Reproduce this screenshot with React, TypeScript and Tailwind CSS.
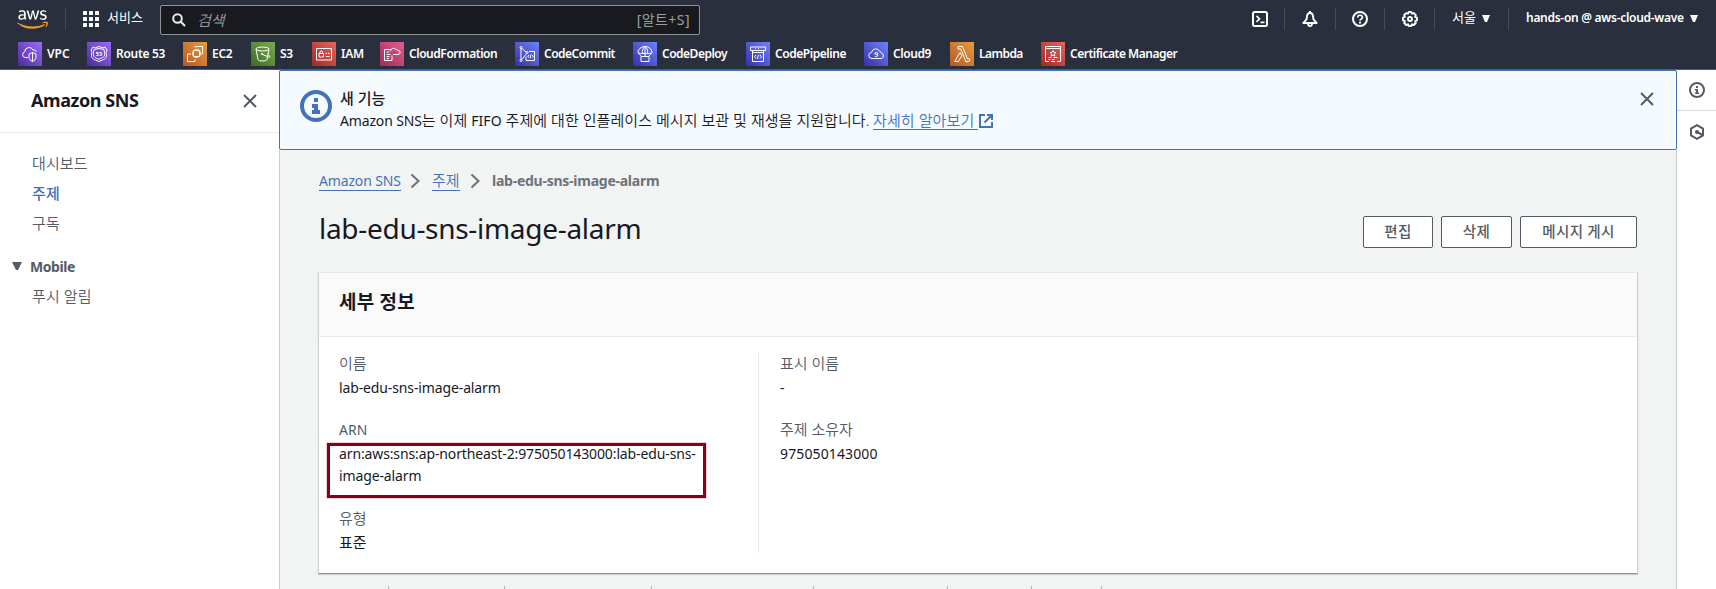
import type { ReactNode } from "react";
import { FaAws } from "react-icons/fa";

type Tone = "purple" | "orange" | "green" | "red" | "pink" | "blue";

const tones: Record<Tone, [string, string]> = {
  purple: ["#4d2a9e", "#9b6cf6"],
  orange: ["#b5562b", "#e79d3a"],
  green: ["#3b6a28", "#7bab50"],
  red: ["#a32727", "#e2685c"],
  pink: ["#a3285a", "#e0608a"],
  blue: ["#392eaa", "#6c84f8"],
};

const glyphs: Record<string, ReactNode> = {
  vpc: (
    <>
      <path d="M10 15.500H7.200a2.900 2.900 0 0 1-.4-5.700 4.300 4.300 0 0 1 8.300-1.600 2.300 2.300 0 0 1 3.300 1.600" />
      <path d="M14.500 10.500l3.500 1.500v3.200c0 2-1.300 3.400-3.500 4.300-2.200-.9-3.500-2.300-3.500-4.300V12zM14.500 10.500v9" />
    </>
  ),
  route53: (
    <>
      <path d="M6 5l2 1 4-1.500L16 6l2-1 2 3-1 2.500c1.500 4 0 6.500-3.500 7.500L12 19.500 8.500 18C5 17 3.500 14.500 5 10.500L4 8z" />
      <path d="M7 7.500l5-1 5 1 .5 3c.8 3-.5 5-3 5.700l-2.500 1-2.500-1c-2.500-.7-3.800-2.700-3-5.700z" />
      <text x="12" y="14" fontSize="5.500" fontWeight="700" textAnchor="middle" fill="#fff" stroke="none" fontFamily="Noto Sans">53</text>
    </>
  ),
  ec2: (
    <>
      <path d="M10.500 8.500h6v6h-6zM12 8.500V7M13.500 8.500V7M15 8.500V7M12 16v-1.500M13.500 16v-1.500M15 16v-1.500M10.500 10H9M10.500 11.500H9M10.500 13H9M18 10h-1.500M18 11.500h-1.500M18 13h-1.500" />
      <path d="M12 5.500V4.500h7.500V12h-1M8 12H4.500v7.500H12V17.500" />
    </>
  ),
  s3: (
    <>
      <ellipse cx="11.500" cy="7" rx="6.500" ry="2" />
      <path d="M5 7l2 10.500c.3 2 8.700 2 9 0L18 7M10.500 12l7 3c1.500.5 2-.5 1-1.200L17.200 13" />
      <circle cx="11" cy="12" r=".6" />
    </>
  ),
  iam: (
    <>
      <path d="M4.500 6.500h15v11.500h-15z" />
      <path d="M7 11.500h4.500V15H7zM8 11.500v-1.300a1.200 1.200 0 0 1 2.500 0v1.300M13.500 11.500h1.500M16 11.500h1.500M14 14.500h3.500" />
    </>
  ),
  cfn: (
    <>
      <path d="M12 13.500v5H4.500v-11h6M6.500 10h3M6.500 12.500h4M6.500 14.500h3M6.500 16.500h2.500" />
      <path d="M13 12.500h5a2 2 0 0 0 .2-4 1.900 1.900 0 0 0-2-.8 3 3 0 0 0-5.600 1.300" />
    </>
  ),
  commit: (
    <>
      <path d="M6 6v12M7 6.500l4 3.500M11.500 11.500L7 17.500M14 9.500h5.500v9H11v-4" />
      <circle cx="6" cy="5.500" r="1" />
      <circle cx="6" cy="18.500" r="1" />
      <circle cx="12" cy="10.500" r="1" />
      <path d="M14 13l-1.300 1.300 1.300 1.300M17 13l1.300 1.300-1.300 1.300M16 12.500l-1 3.500" />
    </>
  ),
  deploy: (
    <path d="M5 10.500a7 6 0 0 1 14 0c0 1.500-14 1.500-14 0zM9.500 11.500c-.5-3 .5-6 2.500-7 2 1 3 4 2.500 7M5 10.500l3.500 4M19 10.500l-3.500 4M12 4.500V14M8 14.500h8v5H8z" />
  ),
  pipeline: (
    <>
      <path d="M4.500 5h15v3.500h-15zM6.500 8.500v11h11v-11M6.500 10.500h11M9 6.700h1M12 6.700h1" />
      <path d="M10 13l-1.500 1.700L10 16.400M14 13l1.500 1.700L14 16.400M12.700 12.800l-1.400 4" />
    </>
  ),
  cloud9: (
    <>
      <path d="M8 16.500a3 3 0 0 1-.5-6 4.300 4.300 0 0 1 8.200-1 2.300 2.300 0 0 1 1.800 1.700 2.700 2.700 0 0 1-.5 5.300z" />
      <text x="12.200" y="15" fontSize="7" fontWeight="600" textAnchor="middle" fill="#fff" stroke="none" fontFamily="Noto Sans">9</text>
    </>
  ),
  lambda: (
    <path d="M8 4.500h4.500l5 12.500 1.500-.6 1 2.300-4 1.300-4.200-10.700M8 4.500V7h2.700l1 2.300M10 10.500l-5.300 9h3.800l3.300-6z" />
  ),
  acm: (
    <>
      <path d="M8 19.500H4.500v-15h15v15H16M4.500 6.500h15" />
      <path d="M12 8.500l.9 1.900 2 .2-1.500 1.400.5 2.100-1.900-1-1.900 1 .5-2.100-1.500-1.400 2-.2zM7.500 15.500h3M12.500 15.500h4M7.500 17.500h2M11 17.500h2.500M10 19.500h4" />
    </>
  ),
};

function ServiceIcon({ name, tone }: { name: string; tone: Tone }) {
  return (
    <svg viewBox="0 0 24 24" className="size-6 shrink-0" fill="none" stroke="#fff" strokeWidth="1">
      <defs>
        <linearGradient id={"g-" + name} x1="0" y1="1" x2="1" y2="0">
          <stop offset="0" stopColor={tones[tone][0]} />
          <stop offset="1" stopColor={tones[tone][1]} />
        </linearGradient>
      </defs>
      <rect width="24" height="24" fill={`url(#g-${name})`} stroke="none" />
      {glyphs[name]}
    </svg>
  );
}

const services: { label: string; icon: string; tone: Tone; cls: string; text: string }[] = [
  { label: "VPC", icon: "vpc", tone: "purple", cls: "w-[69px]", text: "tracking-normal" },
  { label: "Route 53", icon: "route53", tone: "purple", cls: "w-[96px]", text: "tracking-[-0.3px]" },
  { label: "EC2", icon: "ec2", tone: "orange", cls: "w-[68px]", text: "tracking-[-0.3px]" },
  { label: "S3", icon: "s3", tone: "green", cls: "w-[61px]", text: "tracking-[-0.3px]" },
  { label: "IAM", icon: "iam", tone: "red", cls: "w-[68px]", text: "tracking-[-0.3px]" },
  { label: "CloudFormation", icon: "cfn", tone: "pink", cls: "w-[135px]", text: "tracking-[-0.45px]" },
  { label: "CodeCommit", icon: "commit", tone: "blue", cls: "w-[118px]", text: "tracking-[-0.5px]" },
  { label: "CodeDeploy", icon: "deploy", tone: "blue", cls: "w-[113px]", text: "tracking-[-0.5px]" },
  { label: "CodePipeline", icon: "pipeline", tone: "blue", cls: "w-[118px]", text: "tracking-[-0.45px]" },
  { label: "Cloud9", icon: "cloud9", tone: "blue", cls: "w-[86px]", text: "tracking-[-0.4px]" },
  { label: "Lambda", icon: "lambda", tone: "orange", cls: "w-[91px]", text: "tracking-[-0.55px]" },
  { label: "Certificate Manager", icon: "acm", tone: "red", cls: "w-[150px]", text: "tracking-[-0.5px]" },
];

const Divider = ({ className = "" }: { className?: string }) => (
  <div className={`h-[22px] w-px shrink-0 bg-[#434b58] ${className}`} />
);

const Caret = ({ className = "" }: { className?: string }) => (
  <svg viewBox="0 0 8 7" className={`h-[7px] w-2 shrink-0 ${className}`} fill="currentColor">
    <path d="M0 0h8L5 7H3z" />
  </svg>
);

const Close = ({ className = "" }: { className?: string }) => (
  <svg viewBox="0 0 14 14" className={`size-3.5 shrink-0 ${className}`} fill="none" stroke="#545b64" strokeWidth="2">
    <path d="M1 1l12 12M13 1L1 13" />
  </svg>
);

const Chevron = ({ className = "" }: { className?: string }) => (
  <svg viewBox="0 0 10 16" className={`h-4 w-2.5 shrink-0 ${className}`} fill="none" stroke="#6b737c" strokeWidth="2">
    <path d="M1.500 1.500L8.500 8l-7 6.500" />
  </svg>
);

function TopBar() {
  return (
    <div className="flex h-[39px] shrink-0 text-white">
      <div className="mt-[7px] ml-[17px] grid h-[25px] w-[31px] shrink-0">
        <FaAws className="col-start-1 row-start-1 h-[25px] w-[31px] text-white [clip-path:inset(0_0_43%_0)]" />
        <FaAws className="col-start-1 row-start-1 h-[25px] w-[31px] text-[#f0982f] [clip-path:inset(57%_0_0_0)]" />
      </div>
      <Divider className="mt-2 ml-[17px]" />
      <svg viewBox="0 0 16 16" className="mt-[11px] ml-[17px] size-4 shrink-0" fill="#fff">
        {[0, 6, 12].map((y) => [0, 6, 12].map((x) => <rect key={x + "-" + y} x={x} y={y} width="4" height="4" rx=".5" />))}
      </svg>
      <div className="mt-[7px] ml-2 w-[53px] shrink-0 text-[13px] leading-5 tracking-[0.1px] whitespace-nowrap">서비스</div>
      <div className="mt-[5px] flex h-[30px] w-[540px] shrink-0 items-center rounded-[2px] border border-[#8d9494] bg-[#191a1f] pr-[9px] pl-[11px] text-[#95a1a3]">
        <svg viewBox="0 0 14 14" className="size-3.5 shrink-0" fill="none" stroke="#eaeded" strokeWidth="2">
          <circle cx="5.500" cy="5.500" r="4.300" />
          <path d="M8.800 8.800L13 13" />
        </svg>
        <span className="ml-[11px] text-[15px] leading-5 font-[350] italic">검색</span>
        <span className="ml-auto text-[14px] leading-5 tracking-[0.45px]">[알트+S]</span>
      </div>
      <svg viewBox="0 0 16 16" className="mt-[11px] ml-[552px] size-4 shrink-0" fill="none" stroke="#fff" strokeWidth="2">
        <rect x="1" y="1" width="14" height="14" rx="1.500" />
        <path d="M4.500 4.800l3 3-3 3M8.500 11.300h4" strokeWidth="1.700" />
      </svg>
      <Divider className="mt-2 ml-4" />
      <svg viewBox="0 0 16 16" className="mt-[11px] ml-[17px] size-4 shrink-0" fill="none" stroke="#fff" strokeWidth="1.900">
        <path d="M8 0v2M8 2C5.800 2 5 3.800 4.900 6L4.500 8.300 1.300 12h13.400L11.500 8.300 11.100 6C11 3.800 10.200 2 8 2z" strokeLinejoin="round" />
        <path d="M6 12.500c0 3.300 4 3.300 4 0" />
      </svg>
      <Divider className="mt-2 ml-[17px]" />
      <svg viewBox="0 0 16 16" className="mt-[11px] ml-4 size-4 shrink-0" fill="none" stroke="#fff" strokeWidth="2">
        <circle cx="8" cy="8" r="7" />
        <path d="M5.700 6.500c0-3 4.700-3 4.700 0C10.400 8 8 8 8 9.700" strokeWidth="1.700" />
        <path d="M8 10.800v1.700" />
      </svg>
      <Divider className="mt-2 ml-4" />
      <svg viewBox="0 0 16 16" className="mt-[11px] ml-[17px] size-4 shrink-0" fill="none" stroke="#fff" strokeWidth="1.900" strokeLinejoin="round">
        <path d="M6.700 1h2.600l.6 1.600L11.500 2l2.300 2-.7 1.800L15 6.700v2.600l-1.900.9.700 1.800-2 2-1.900-.7-.6 1.700H6.700l-.6-1.700-1.900.7-2-2 .7-1.800L1 9.300V6.700l1.900-.9L2.200 4l2-1.900 1.900.6z" />
        <circle cx="8" cy="8" r="2" />
      </svg>
      <Divider className="mt-2 ml-4" />
      <div className="mt-[7px] ml-[17px] w-[30px] shrink-0 text-[13px] leading-5">서울</div>
      <Caret className="mt-[15px]" />
      <Divider className="mt-2 ml-[18px]" />
      <div className="mt-2 ml-[17px] w-[164px] shrink-0 text-[12px] leading-5 font-semibold tracking-[-0.28px] whitespace-nowrap">
        hands-on @ aws-cloud-wave
      </div>
      <Caret className="mt-[15px]" />
    </div>
  );
}

function SideNav() {
  return (
    <nav className="w-[279px] shrink-0 bg-white text-[#545b64]">
      <div className="flex h-[63px] items-center border-b border-[#e6e8ea] pr-[22px] pb-px pl-[31px]">
        <h2 className="pb-px text-[18px] leading-6 font-bold tracking-[-0.42px] text-[#16191f]">Amazon SNS</h2>
        <Close className="ml-auto" />
      </div>
      <ul className="flex flex-col pt-[15px] pl-[32px] text-[15px] leading-[30px] font-[350] tracking-[0.1px]">
        <li>대시보드</li>
        <li className="font-medium text-[#3f6fb5]">주제</li>
        <li>구독</li>
      </ul>
      <div className="mt-[13px] flex h-[30px] items-center pl-3 text-[14px] font-bold tracking-[-0.45px]">
        <svg viewBox="0 0 10 8" className="mr-2 h-2 w-2.5" fill="#545b64">
          <path d="M0 0h10L6 8H4z" />
        </svg>
        Mobile
      </div>
      <div className="pl-[32px] text-[15px] leading-[30px] font-[350] tracking-[0.1px]">푸시 알림</div>
    </nav>
  );
}

function Banner() {
  return (
    <section className="flex h-20 shrink-0 rounded-[2px] border border-[#4472b8] bg-[#f5faff] text-[#16191f]">
      <svg viewBox="0 0 32 32" className="mt-[19px] ml-5 size-8 shrink-0" fill="#4472b8">
        <circle cx="16" cy="16" r="14" fill="none" stroke="#4472b8" strokeWidth="4" />
        <path d="M14 8h4v4h-4zM12 14h6v6h2v4h-8v-4h2v-2h-2z" />
      </svg>
      <div className="mt-[16px] ml-[8px]">
        <p className="text-[15px] leading-[22px] font-medium">새 기능</p>
        <p className="flex text-[15px] leading-[22px] font-[350] whitespace-nowrap">
          <span className="w-[530px] tracking-[0.05px]">
            <span className="text-[14px] font-normal tracking-[-0.15px]">Amazon SNS</span>는 이제{" "}
            <span className="text-[14px] font-normal">FIFO</span> 주제에 대한 인플레이스 메시지 보관 및 재생을 지원합니다.
          </span>
          <a className="ml-[3px] flex text-[#4472b8]">
            <span className="h-[21px] w-[105px] border-b border-[#4472b8] tracking-[0.1px]">자세히 알아보기</span>
            <svg viewBox="0 0 14 14" className="mt-[5px] ml-px size-3.5" fill="none" stroke="#4472b8" strokeWidth="2">
              <path d="M6 1H1v12h12V8M8 1h5v5M13 1L5.500 8.500" />
            </svg>
          </a>
        </p>
      </div>
      <Close className="mt-[21px] mr-[22px] ml-auto" />
    </section>
  );
}

function Field({ label, children, className = "" }: { label: string; children: ReactNode; className?: string }) {
  return (
    <div className={className}>
      <div className={`h-[22px] text-[#545b64] ${label === "ARN" ? "text-[14px] leading-[22px]" : "text-[15px] leading-[20px] font-[350]"}`}>
        {label}
      </div>
      <div className="mt-[2px] text-[14px] leading-[22px] tracking-[-0.125px] whitespace-pre-line">{children}</div>
    </div>
  );
}

const buttons = [
  { label: "편집", cls: "w-[70px]" },
  { label: "삭제", cls: "w-[71px]" },
  { label: "메시지 게시", cls: "w-[117px]" },
];

const tabs = ["w-[70px]", "w-[116px]", "w-[147px]", "w-[162px]", "w-[134px]", "w-[84px]", "w-[70px]"];

function Content() {
  return (
    <div className="flex-1 border-x border-[#c8cbce] pr-[39px] pl-[39px] text-[#16191f]">
      <div className="flex pt-[21px] text-[14px] leading-5 text-[#4472b8]">
        <a className="h-5 w-[82px] border-b border-[#4472b8] tracking-[-0.15px] whitespace-nowrap">Amazon SNS</a>
        <Chevron className="mt-0.5 ml-[9px]" />
        <a className="ml-3 h-5 w-7 border-b border-[#4472b8] text-[15px] leading-[19px] font-[350]">주제</a>
        <Chevron className="mt-0.5 ml-[10px]" />
        <span className="ml-3 font-bold tracking-[-0.25px] text-[#6b737c]">lab-edu-sns-image-alarm</span>
      </div>
      <div className="mt-3 flex h-[50px]">
        <h1 className="mt-[7px] text-[28px] leading-9 tracking-[-0.3px] text-[#16191f]">lab-edu-sns-image-alarm</h1>
        <div className="mt-[13px] ml-auto flex h-8 gap-2">
          {buttons.map((b) => (
            <button key={b.label} className={`rounded-[2px] border border-[#545b64] bg-white pb-0.5 text-[14.500px] leading-[28px] font-medium tracking-[0.3px] whitespace-nowrap text-[#545b64] ${b.cls}`}>
              {b.label}
            </button>
          ))}
        </div>
      </div>
      <section className="-mr-px -ml-px mt-[19px] h-[302px] border border-t-[#e6e8e8] border-r-[#cdd0d1] border-b-[#8b9198] border-l-[#cdd0d1] bg-white shadow-[0_1px_1px_0_rgba(0,28,36,0.15)]">
        <div className="flex h-16 items-center border-b border-[#e9ebeb] bg-[#fafafa] pb-[5px] pl-5 text-[19px] font-bold tracking-[0.2px]">
          세부 정보
        </div>
        <div className="grid h-[216px] grid-cols-[439px_1fr] pt-4">
          <div className="relative h-[200px] pl-5">
            <Field label="이름">lab-edu-sns-image-alarm</Field>
            <Field label="ARN" className="mt-[20px]">
              {"arn:aws:sns:ap-northeast-2:975050143000:lab-edu-sns-\nimage-alarm"}
            </Field>
            <Field label="유형" className="mt-[21px]">
              <span className="block text-[15px] leading-[20px]">표준</span>
            </Field>
            <div className="absolute top-[90px] left-[8px] h-[55px] w-[379px] border-[3px] border-[#870017] shadow-[0_0_1px_#870017]" />
          </div>
          <div className="h-[200px] border-l border-[#e6e8ea] pl-[21px]">
            <Field label="표시 이름">-</Field>
            <Field label="주제 소유자" className="mt-[20px]">
              <span className="tracking-[0.12px]">975050143000</span>
            </Field>
          </div>
        </div>
      </section>
      <div className="mt-3 flex h-[3px]">
        {tabs.map((w, i) => (
          <div key={i} className={`border-r border-[#aab7b8] ${w}`} />
        ))}
      </div>
    </div>
  );
}

function ToolRail() {
  return (
    <aside className="flex w-[39px] shrink-0 flex-col items-center bg-white">
      <div className="flex h-[41px] w-full items-center justify-center border-b border-[#d5d9d9]">
        <svg viewBox="0 0 16 16" className="size-4" fill="#545b64">
          <circle cx="8" cy="8" r="7" fill="none" stroke="#545b64" strokeWidth="2" />
          <path d="M7 4h2v2H7zM6 7h3v3.500h1V12H6v-1.500h1v-2H6z" />
        </svg>
      </div>
      <svg viewBox="0 0 16 16" className="mt-[13px] size-4" fill="none" stroke="#545b64" strokeWidth="2">
        <path d="M8 1.200l6 3.400v6.800l-6 3.400-6-3.400V4.600z" />
        <circle cx="8" cy="8" r="2" fill="#545b64" stroke="none" />
        <path d="M8 8l5.500 3" />
      </svg>
    </aside>
  );
}

export default function App() {
  return (
    <div className="flex h-[589px] w-[1716px] flex-col overflow-hidden bg-[#f2f3f3] font-['Noto_Sans','Noto_Sans_CJK_KR',sans-serif]">
      <header className="flex h-[70px] shrink-0 flex-col border-b border-[#545b64] bg-[#292f3d]">
        <TopBar />
        <div className="mt-[3px] flex pl-[18px]">
          {services.map((s) => (
            <div key={s.label} className={`flex h-6 shrink-0 items-center gap-[5px] text-[12px] font-semibold whitespace-nowrap text-white ${s.cls}`}>
              <ServiceIcon name={s.icon} tone={s.tone} />
              <span className={s.text}>{s.label}</span>
            </div>
          ))}
        </div>
      </header>
      <div className="flex min-h-0 flex-1">
        <SideNav />
        <main className="flex min-w-0 flex-1 flex-col">
          <Banner />
          <Content />
        </main>
        <ToolRail />
      </div>
    </div>
  );
}
